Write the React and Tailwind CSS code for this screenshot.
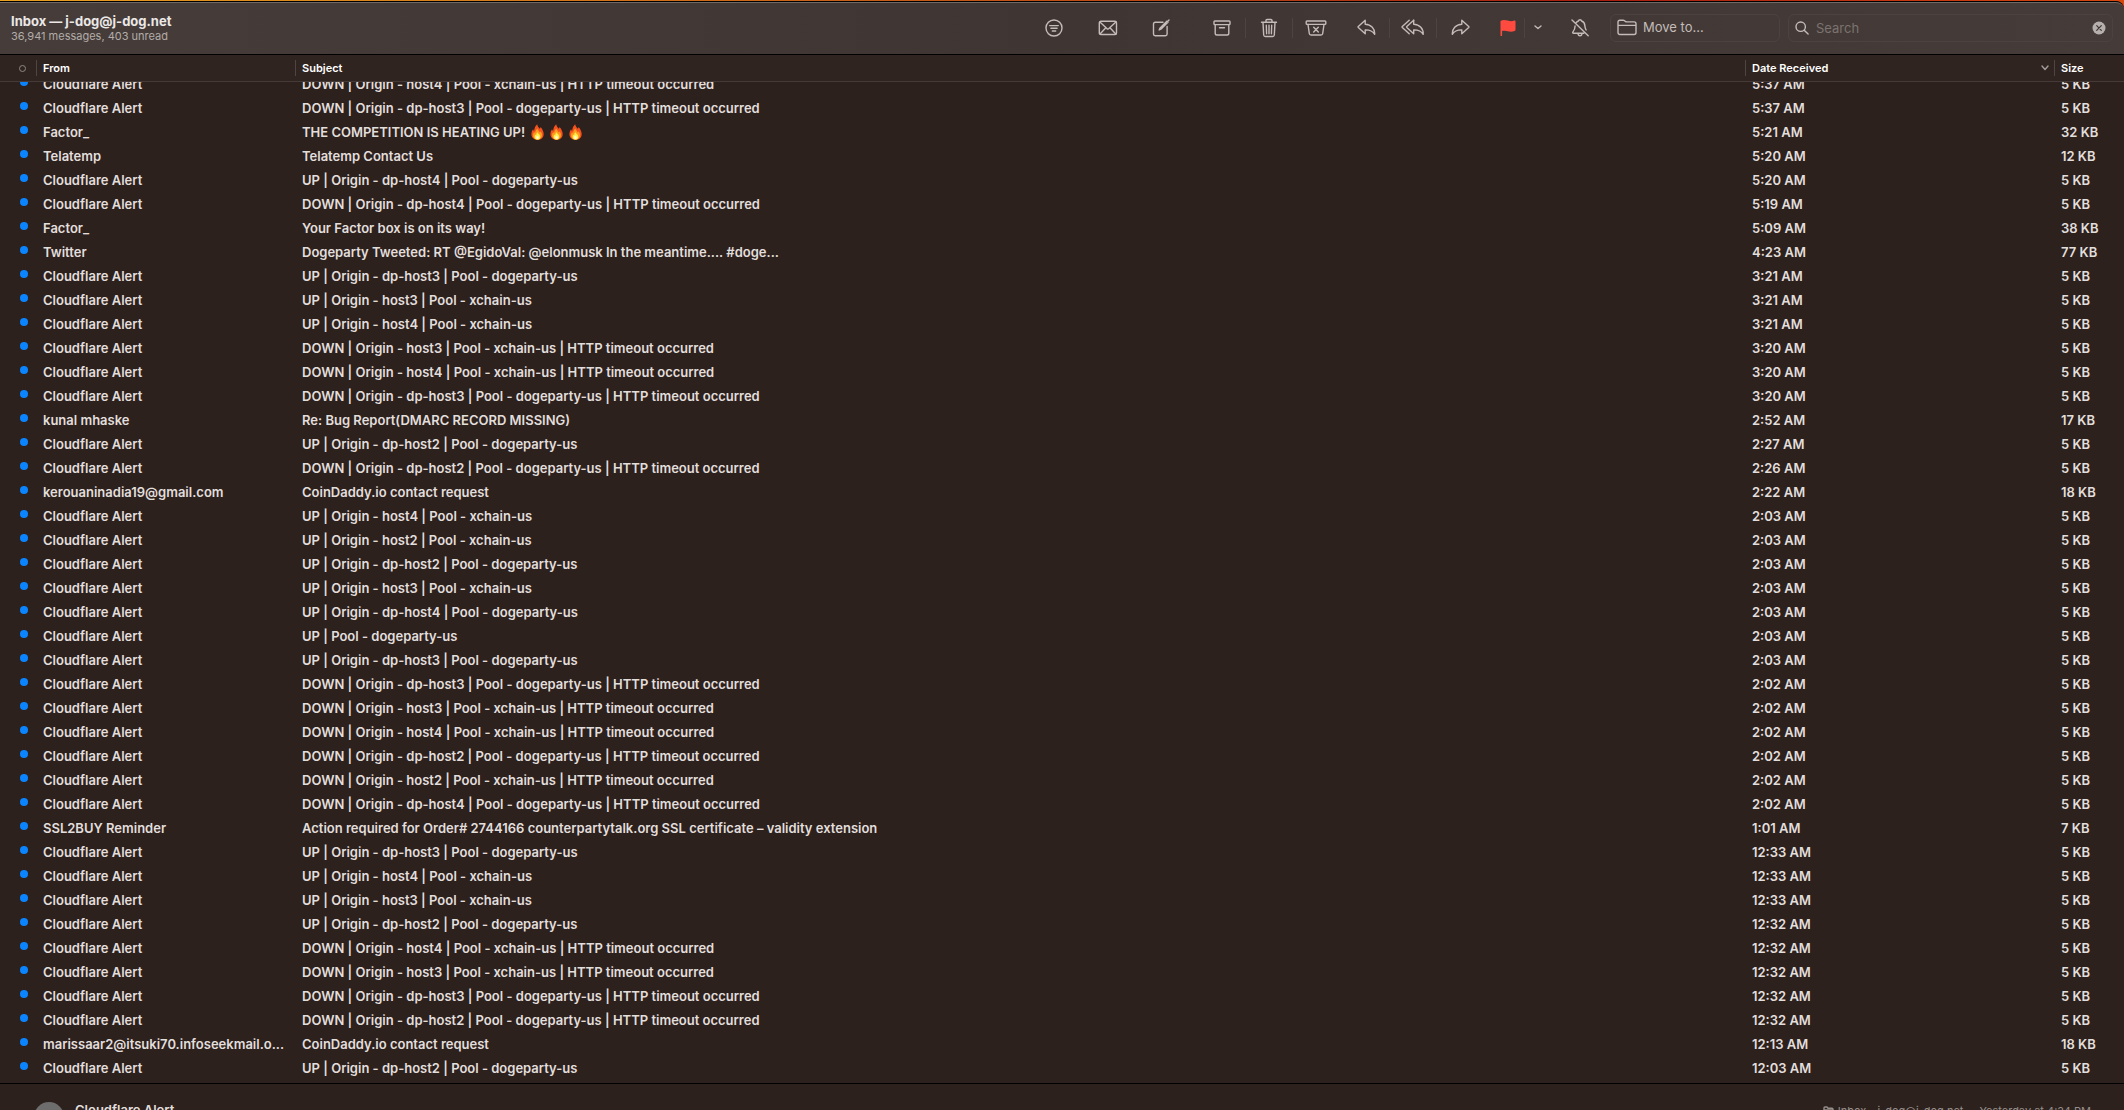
import React, { useLayoutEffect, useRef } from "react";

const CF = "Cloudflare Alert";
const up = (host, pool) => `UP | Origin - ${host} | Pool - ${pool}`;
const down = (host, pool) => `DOWN | Origin - ${host} | Pool - ${pool} | HTTP timeout occurred`;
const X = "xchain-us";
const D = "dogeparty-us";

const messages = [
  [CF, down("host4", X), "5:37 AM", "5 KB"],
  [CF, down("dp-host3", D), "5:37 AM", "5 KB"],
  ["Factor_", "THE COMPETITION IS HEATING UP!", "5:21 AM", "32 KB", 3],
  ["Telatemp", "Telatemp Contact Us", "5:20 AM", "12 KB"],
  [CF, up("dp-host4", D), "5:20 AM", "5 KB"],
  [CF, down("dp-host4", D), "5:19 AM", "5 KB"],
  ["Factor_", "Your Factor box is on its way!", "5:09 AM", "38 KB"],
  ["Twitter", "Dogeparty Tweeted: RT @EgidoVal: @elonmusk In the meantime.... #doge...", "4:23 AM", "77 KB"],
  [CF, up("dp-host3", D), "3:21 AM", "5 KB"],
  [CF, up("host3", X), "3:21 AM", "5 KB"],
  [CF, up("host4", X), "3:21 AM", "5 KB"],
  [CF, down("host3", X), "3:20 AM", "5 KB"],
  [CF, down("host4", X), "3:20 AM", "5 KB"],
  [CF, down("dp-host3", D), "3:20 AM", "5 KB"],
  ["kunal mhaske", "Re: Bug Report(DMARC RECORD MISSING)", "2:52 AM", "17 KB"],
  [CF, up("dp-host2", D), "2:27 AM", "5 KB"],
  [CF, down("dp-host2", D), "2:26 AM", "5 KB"],
  ["kerouaninadia19@gmail.com", "CoinDaddy.io contact request", "2:22 AM", "18 KB"],
  [CF, up("host4", X), "2:03 AM", "5 KB"],
  [CF, up("host2", X), "2:03 AM", "5 KB"],
  [CF, up("dp-host2", D), "2:03 AM", "5 KB"],
  [CF, up("host3", X), "2:03 AM", "5 KB"],
  [CF, up("dp-host4", D), "2:03 AM", "5 KB"],
  [CF, "UP | Pool - dogeparty-us", "2:03 AM", "5 KB"],
  [CF, up("dp-host3", D), "2:03 AM", "5 KB"],
  [CF, down("dp-host3", D), "2:02 AM", "5 KB"],
  [CF, down("host3", X), "2:02 AM", "5 KB"],
  [CF, down("host4", X), "2:02 AM", "5 KB"],
  [CF, down("dp-host2", D), "2:02 AM", "5 KB"],
  [CF, down("host2", X), "2:02 AM", "5 KB"],
  [CF, down("dp-host4", D), "2:02 AM", "5 KB"],
  ["SSL2BUY Reminder", "Action required for Order# 2744166 counterpartytalk.org SSL certificate – validity extension", "1:01 AM", "7 KB"],
  [CF, up("dp-host3", D), "12:33 AM", "5 KB"],
  [CF, up("host4", X), "12:33 AM", "5 KB"],
  [CF, up("host3", X), "12:33 AM", "5 KB"],
  [CF, up("dp-host2", D), "12:32 AM", "5 KB"],
  [CF, down("host4", X), "12:32 AM", "5 KB"],
  [CF, down("host3", X), "12:32 AM", "5 KB"],
  [CF, down("dp-host3", D), "12:32 AM", "5 KB"],
  [CF, down("dp-host2", D), "12:32 AM", "5 KB"],
  ["marissaar2@itsuki70.infoseekmail.o...", "CoinDaddy.io contact request", "12:13 AM", "18 KB"],
  [CF, up("dp-host2", D), "12:03 AM", "5 KB"],
];

function Icon({ w, h, children, className = "" }) {
  return (
    <svg
      width={w}
      height={h}
      viewBox={`0 0 ${w} ${h}`}
      fill="none"
      stroke="currentColor"
      strokeWidth="1.4"
      strokeLinecap="round"
      strokeLinejoin="round"
      aria-hidden="true"
      className={`shrink-0 ${className}`}
    >
      {children}
    </svg>
  );
}

const FilterIcon = () => (
  <Icon w={18} h={18}>
    <circle cx="9" cy="9" r="8" />
    <path d="M4.7 6.6h8.6M5.9 9.3h6.2M7.3 12h3.4" />
  </Icon>
);
const MailIcon = () => (
  <Icon w={20} h={16}>
    <rect x="1.3" y="1.3" width="17.2" height="13.2" rx="1.6" />
    <path d="M1.9 2l7 6.6c.7.6 1.4.6 2 0l7-6.6M2 14l5.6-6M17.8 14l-5.6-6" />
  </Icon>
);
const ComposeIcon = () => (
  <Icon w={18} h={18}>
    <path d="M11 3.2H3.2c-1 0-1.7.7-1.7 1.7v10.2c0 1 .7 1.7 1.7 1.7h10.2c1 0 1.7-.7 1.7-1.7V7.4" />
    <path d="M7.2 10.9l.7-1.7 7.2-7.2 1 1-7.2 7.200z" />
    <path d="M16.600 1.500l.4-.4" />
  </Icon>
);
const ArchiveIcon = () => (
  <Icon w={18} h={16}>
    <rect x="1" y="1" width="16" height="3.6" rx=".8" />
    <path d="M2.2 4.6v8.6c0 1 .7 1.8 1.8 1.8h10c1.100 0 1.800-.8 1.800-1.800V4.600M6.500 7.700h5" />
  </Icon>
);
const TrashIcon = () => (
  <Icon w={18} h={20}>
    <path d="M1.500 4.300h15M6 4.200V2.600c0-.7.400-1.100 1.100-1.100h3.800c.7 0 1.100.4 1.100 1.100v1.600M3 4.500l.7 12.500c.1 1 .7 1.500 1.600 1.500h7.400c.9 0 1.500-.5 1.600-1.500L15 4.500M6.300 7.200l.3 8.500M9 7.200v8.500M11.700 7.200l-.3 8.500" />
  </Icon>
);
const JunkIcon = () => (
  <Icon w={22} h={16}>
    <rect x="1.200" y="1" width="19.600" height="3.400" rx=".8" />
    <path d="M3 4.500l1.300 9c.1.900.7 1.500 1.700 1.500h10c1 0 1.600-.6 1.700-1.500l1.300-9M8.700 7.200l4.600 4.800M13.300 7.200l-4.600 4.800" />
  </Icon>
);
const arrow = "M8.200 1.300L1.300 7.600c-.3.300-.3.600 0 .9l6.900 6.200V10.900c4.200-.1 7.200.7 9.500 4.400.3-5.500-3.500-9.800-9.500-10z";
const ReplyIcon = () => (
  <Icon w={19} h={17}>
    <path d={arrow} />
  </Icon>
);
const ForwardIcon = () => (
  <Icon w={19} h={17} className="-scale-x-100">
    <path d={arrow} />
  </Icon>
);
const ReplyAllIcon = () => (
  <Icon w={24} h={17}>
    <path d="M12.700 1.300V1.300M8.200 1.300L1.300 7.600c-.3.300-.3.600 0 .9l6.900 6.200" />
    <path transform="translate(4.500 0)" d={arrow} />
  </Icon>
);
const FlagIcon = () => (
  <svg width="16" height="18" viewBox="0 0 16 18" fill="#ff4a40" aria-hidden="true">
    <path d="M.5 2C2.500.7 5.200.8 7.700 1.600c2.300.7 4.300.7 6.500 0 .8-.3 1.300 0 1.300.8v8.400c0 .6-.3 1-.8 1.200-2.300.9-4.600.9-7 .2-2.100-.6-3.900-.7-5.600-.1V16.500c0 .8-1.600.8-1.600 0z" />
  </svg>
);
const BellOffIcon = () => (
  <Icon w={18} h={18}>
    <path d="M5.300 3.600C6 2.600 6.900 2.200 7.400 2c.2-.8.800-1.300 1.600-1.300s1.400.5 1.600 1.300c2 .7 3.200 2.500 3.300 4.900.1 1.800.5 3 1.200 4M4.100 6.900c-.1 3-1 4.600-2 5.700-.7.800-.5 1.700.6 1.700h10.100M7 14.500c.1 1.500.9 2.300 2 2.300s1.900-.8 2-2.300M1 1l16.200 15.800" />
  </Icon>
);
const FolderIcon = () => (
  <Icon w={20} h={17}>
    <path d="M1 3.200C1 2 1.700 1.300 2.900 1.300h3.300c.6 0 1 .2 1.400.5l.7.600c.4.300.8.500 1.400.5h7.400c1.200 0 1.900.7 1.900 1.900v8.800c0 1.200-.7 1.900-1.900 1.900H2.900c-1.200 0-1.900-.7-1.900-1.900zM1 6.400h18" />
  </Icon>
);
const SearchIcon = () => (
  <Icon w={14} h={14}>
    <circle cx="5.700" cy="5.700" r="4.700" />
    <path d="M9.200 9.200l3.900 3.900" />
  </Icon>
);

function Flame() {
  return (
    <svg width="13" height="16" viewBox="0 0 13 16" role="img" aria-label="fire" className="shrink-0">
      <path fill="#f4511e" d="M6.200.2c.4 2.100 1.400 3 2.600 4.600.5-.5.700-1.100.7-1.900 1.900 2 3.200 4.700 3.200 7.100 0 3.600-2.600 5.800-6.100 5.800C3 15.800.4 13.700.4 10.200c0-1.900.8-3.600 1.700-4.900.2.900.5 1.400 1 1.800C3.300 4.300 4.100 1.900 6.200.2z" />
      <path fill="#ff9d1f" d="M6.500 4.500c.3 1.700 1.600 2.600 2.400 4 .4-.4.600-.8.600-1.300 1 1.200 1.500 2.500 1.500 3.800 0 2.800-1.900 4.600-4.500 4.600S2 14 2 11.300c0-1.300.5-2.500 1.200-3.400.2.600.5 1 .9 1.300.2-1.900.9-3.600 2.400-4.700z" />
      <path fill="#fff04d" d="M6.600 8.300c.2 1.200 2.700 2.300 2.700 4.500 0 1.800-1.200 2.900-2.800 2.900s-2.900-1.100-2.900-2.900c0-1 .4-1.700.9-2.300.2.400.4.600.7.700.1-1.100.5-2.200 1.400-2.900z" />
      <path fill="#fff9d0" d="M6.500 11.500c.8.600 1.400 1.200 1.400 2 0 .9-.6 1.500-1.400 1.500S5.100 14.400 5.100 13.500c0-.8.600-1.400 1.400-2z" />
    </svg>
  );
}

const Sep = () => <span className="h-5 w-px shrink-0 bg-[#4d4441]" />;

function Tool({ label, className, children }) {
  return (
    <button type="button" aria-label={label} className={`flex h-7 shrink-0 items-center justify-center ${className}`}>
      {children}
    </button>
  );
}

function Toolbar() {
  return (
    <header className="flex h-[52px] shrink-0 items-center rounded-tr-lg border-t border-[#716966] bg-linear-to-r from-[#463d3a] via-[#3f3532] to-[#453c39] pr-[11px] pb-[2px] pl-[11px] text-[#c4bcb9]">
      <div className="flex min-w-0 flex-1 flex-col">
        <h1 className="truncate text-[13px] leading-4 font-bold text-[#ebe8e7]">Inbox — j-dog@j-dog.net</h1>
        <p className="truncate text-[11px] leading-[14px] text-[#b3aca9]">36,941 messages, 403 unread</p>
      </div>
      <nav aria-label="Message actions" className="flex items-center">
        <Tool label="Filter" className="w-[54px]"><FilterIcon /></Tool>
        <Tool label="Get mail" className="w-[53px]"><MailIcon /></Tool>
        <Tool label="New message" className="w-[54px]"><ComposeIcon /></Tool>
        <div className="ml-[11px] flex items-center">
          <Tool label="Archive" className="w-[46px]"><ArchiveIcon /></Tool>
          <Sep />
          <Tool label="Delete" className="w-[46px]"><TrashIcon /></Tool>
          <Sep />
          <Tool label="Junk" className="w-[46px]"><JunkIcon /></Tool>
        </div>
        <div className="ml-1 flex items-center">
          <Tool label="Reply" className="w-[46px]"><ReplyIcon /></Tool>
          <Sep />
          <Tool label="Reply all" className="w-[46px]"><ReplyAllIcon /></Tool>
          <Sep />
          <Tool label="Forward" className="w-[46px]"><ForwardIcon /></Tool>
        </div>
        <div className="ml-[9px] flex items-center">
          <Tool label="Flag" className="w-8"><FlagIcon /></Tool>
          <Sep />
          <Tool label="Flag color" className="w-[26px]">
            <Icon w={8} h={5}><path d="M1 1l3 2.500L7 1" /></Icon>
          </Tool>
        </div>
        <Tool label="Mute" className="ml-[6px] w-[46px]"><BellOffIcon /></Tool>
      </nav>
      <button type="button" className="ml-[7px] flex h-7 w-[170px] shrink-0 items-center gap-[6px] rounded-md border border-[#4c4340] pl-[6px] text-[13px]">
        <FolderIcon />
        Move to...
      </button>
      <label className="ml-2 flex h-7 w-[325px] shrink-0 items-center gap-[7px] rounded-md border border-[#4c4340] pr-[6px] pl-[6px]">
        <SearchIcon />
        <input
          type="text"
          aria-label="Search"
          placeholder="Search"
          className="min-w-0 flex-1 bg-transparent pt-[2px] text-[13px] outline-none placeholder:text-[#7b7370]"
        />
        <button type="button" aria-label="Clear search" className="shrink-0">
          <svg width="14" height="14" viewBox="0 0 14 14" aria-hidden="true">
            <circle cx="7" cy="7" r="6.500" fill="#b5afad" />
            <path d="M4.700 4.700l4.600 4.600M9.300 4.700l-4.600 4.600" stroke="#403633" strokeWidth="1.200" strokeLinecap="round" />
          </svg>
        </button>
      </label>
    </header>
  );
}

function HeadCell({ children, sorted }) {
  return (
    <th scope="col" aria-sort={sorted ? "descending" : undefined} className="p-0 text-left font-semibold">
      <div className="flex h-[27px] items-center border-b border-[#453a37] bg-[#2f2420]">
        <span className="h-4 w-px bg-[#4f4542]" />
        <span className="flex-1 pl-[6px]">{children}</span>
        {sorted && (
          <Icon w={8} h={6} className="mr-[5px] text-[#a39b98]"><path d="M1 1l3 3.500L7 1" /></Icon>
        )}
      </div>
    </th>
  );
}

function MessageTable() {
  const scroller = useRef(null);
  useLayoutEffect(() => {
    scroller.current.scrollTop = 10;
  }, []);
  return (
    <main ref={scroller} className="min-h-0 flex-1 overflow-y-auto [scrollbar-width:none]">
      <table className="w-full table-fixed border-separate border-spacing-0">
        <colgroup>
          <col className="w-9" />
          <col className="w-[259px]" />
          <col />
          <col className="w-[309px]" />
          <col className="w-[70px]" />
        </colgroup>
        <thead className="sticky top-0 z-10 text-[11px] text-white">
          <tr>
            <th scope="col" aria-label="Unread" className="p-0">
              <div className="flex h-[27px] items-center border-b border-[#453a37] bg-[#2f2420] pl-[19px]">
                <span className="size-[7px] rounded-full border border-[#8f8784]" />
              </div>
            </th>
            <HeadCell>From</HeadCell>
            <HeadCell>Subject</HeadCell>
            <HeadCell sorted>Date Received</HeadCell>
            <HeadCell>Size</HeadCell>
          </tr>
        </thead>
        <tbody className="text-[13px] leading-6 font-semibold whitespace-nowrap text-[#e2dedc]">
          {messages.map(([from, subject, date, size, flames = 0], i) => (
            <tr key={i} className="h-6">
              <td className="p-0 pl-5">
                <span className="mb-1 block size-2 rounded-full bg-[#0a84ff]" />
              </td>
              <td className="truncate p-0 pl-[7px]">{from}</td>
              <td className="truncate p-0 pl-[7px]">
                <span className="flex h-6 items-center">
                  {subject}
                  {flames > 0 && (
                    <span className="ml-[6px] flex gap-[6px]">
                      {Array.from({ length: flames }, (_, n) => <Flame key={n} />)}
                    </span>
                  )}
                </span>
              </td>
              <td className="p-0 pl-[7px]">{date}</td>
              <td className="p-0 pl-[7px]">{size}</td>
            </tr>
          ))}
        </tbody>
      </table>
      <div className="h-1" />
    </main>
  );
}

function Preview() {
  return (
    <section className="h-[27px] shrink-0 overflow-hidden border-t border-black">
      <div className="flex items-start pt-[18px] pr-[33px] pl-[34px]">
        <span className="size-[30px] shrink-0 rounded-full bg-[#6d6d6d]" />
        <h2 className="ml-[11px] flex-1 text-[13px] leading-4 font-semibold text-[#e2dedc]">Cloudflare Alert</h2>
        <p className="mt-[2px] flex items-center gap-1 text-[11px] leading-[14px] text-[#968e8b]">
          <Icon w={11} h={10}><path d="M1 2c0-.6.400-1 1-1h2l1 1.200h4c.6 0 1 .4 1 1V8c0 .6-.4 1-1 1H2c-.6 0-1-.4-1-1zM1 4h9" /></Icon>
          <span>Inbox - j-dog@j-dog.net</span>
          <time className="ml-3">Yesterday at 4:24 PM</time>
        </p>
      </div>
    </section>
  );
}

export default function App() {
  return (
    <div className="flex h-screen flex-col overflow-hidden bg-[#2c211d] font-['Inter',sans-serif]">
      <div className="shrink-0 bg-linear-to-r from-[#e8a020] via-[#a81c10] via-75% to-[#d8470e]">
        <div className="h-px" />
        <div className="rounded-tr-lg border-t border-black bg-black pb-px">
          <Toolbar />
        </div>
      </div>
      <MessageTable />
      <Preview />
    </div>
  );
}
